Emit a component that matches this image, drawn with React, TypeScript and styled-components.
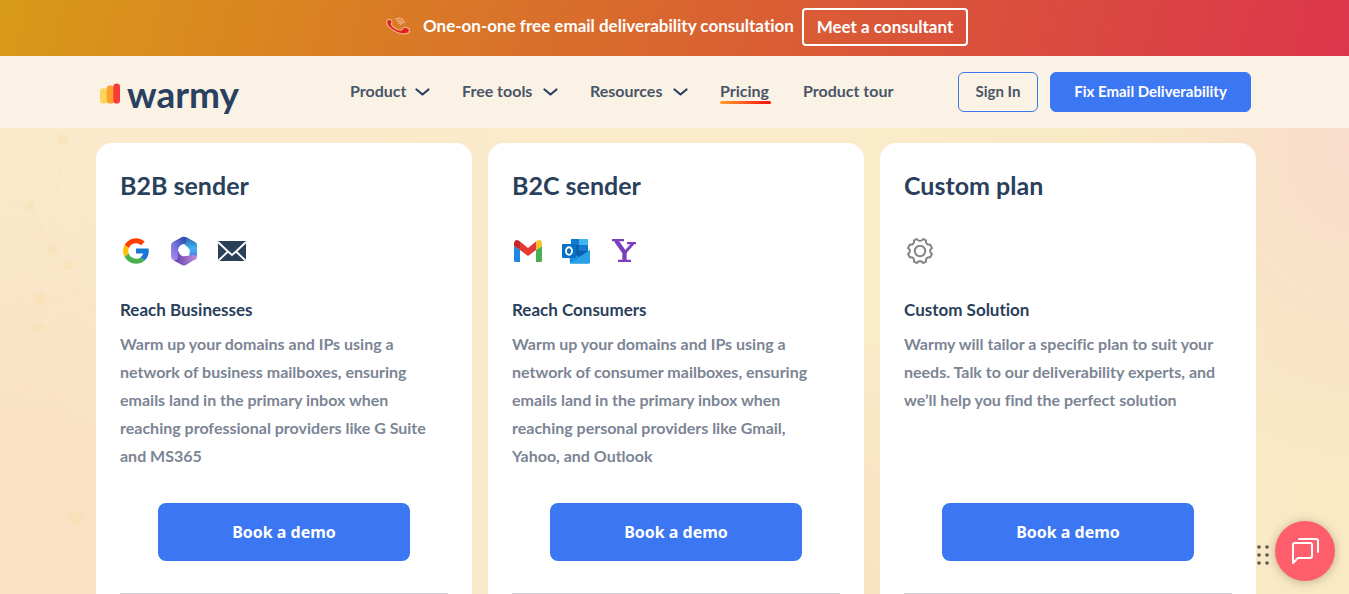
import React from "react";
import styled, { createGlobalStyle } from "styled-components";

const Global = createGlobalStyle`
  *, *::before, *::after { box-sizing: border-box; }
  html, body { margin: 0; }
  body {
    font-family: Lato, "Noto Sans", sans-serif;
    font-variant-ligatures: none;
    color: #2a3f5c;
    overflow: hidden;
  }
  a { color: inherit; text-decoration: none; }
  h2, h3, p, ul { margin: 0; padding: 0; }
`;

const Page = styled.div`
  display: flex;
  flex-direction: column;
  height: 100vh;
  min-width: 1200px;
`;

const Banner = styled.aside`
  display: flex;
  flex-shrink: 0;
  align-items: center;
  justify-content: center;
  gap: 12px;
  height: 56px;
  padding: 0 0 2px 4px;
  background: linear-gradient(105deg, #d99a18 0%, #d9652f 50%, #dc364c 100%);
  color: #fff;
  font-size: 17px;
  font-weight: 700;
`;

const BannerText = styled.span`
  width: 367px;
  padding-bottom: 4px;
  white-space: nowrap;
`;

const ConsultLink = styled.a`
  display: flex;
  align-items: center;
  justify-content: center;
  width: 166px;
  height: 38px;
  padding-bottom: 2px;
  border: 2px solid #fff;
  border-radius: 4px;
`;

const Header = styled.header`
  flex-shrink: 0;
  height: 72px;
  padding-left: 3px;
  background: #faf3e5;
`;

const HeaderInner = styled.div`
  display: flex;
  align-items: center;
  justify-content: space-between;
  width: 1160px;
  height: 100%;
  margin: 0 auto;
  padding: 0 5px 0 4px;
`;

const Logo = styled.a`
  display: flex;
  align-items: center;
  gap: 6px;
  width: 139px;
  padding-top: 4px;
  color: #2a4060;
  font-size: 37px;
  font-weight: 700;
  line-height: 44px;
`;

const Nav = styled.nav`
  display: flex;
  gap: 32px;
  margin-left: 50px;
`;

const NavLink = styled.a<{ $width: number; $active?: boolean }>`
  position: relative;
  display: flex;
  align-items: center;
  justify-content: space-between;
  width: ${(p) => p.$width}px;
  height: 24px;
  color: #4a5568;
  font-size: 16px;
  font-weight: 700;
  white-space: nowrap;

  &::after {
    content: "";
    display: ${(p) => (p.$active ? "block" : "none")};
    position: absolute;
    inset: auto 0 0;
    height: 3px;
    border-radius: 2px;
    background: linear-gradient(90deg, #ff9f2e, #f80f0f);
  }
`;

const NavLabel = styled.span`
  padding-bottom: 4px;
`;

const Actions = styled.div`
  display: flex;
  gap: 12px;
`;

const HeaderButton = styled.button<{ $primary?: boolean }>`
  width: ${(p) => (p.$primary ? 201 : 80)}px;
  height: 40px;
  padding: 0 0 2px;
  border: 1px solid #3b76f3;
  border-radius: 6px;
  background: ${(p) => (p.$primary ? "#3b76f3" : "transparent")};
  color: ${(p) => (p.$primary ? "#fff" : "#4a5568")};
  font-family: inherit;
  font-size: 15px;
  font-weight: 700;
`;

const Plans = styled.main`
  position: relative;
  flex: 1;
  min-height: 0;
  padding: 15px 0 0 3px;
  overflow: hidden;
  background:
    radial-gradient(ellipse 260px 340px at 100% 4%, #f9dccb 0%, #f9dccb00 100%),
    radial-gradient(ellipse 420px 420px at 0% 100%, #fae0c5 30%, #fae0c500 100%),
    radial-gradient(ellipse 340px 260px at 60% 100%, #fae3c3 20%, #fae3c300 100%),
    linear-gradient(90deg, #fae9cb, #faebcb 50%, #f9eac4);
`;

const Network = styled.svg`
  position: absolute;
  top: 0;
  left: 0;
  color: #fae0b0;
`;

const Cards = styled.div`
  position: relative;
  display: grid;
  grid-template-columns: repeat(3, 1fr);
  gap: 16px;
  width: 1160px;
  margin: 0 auto;
`;

const Card = styled.article`
  padding: 24px 24px 64px;
  border-radius: 16px;
  background: #fff;
`;

const PlanName = styled.h2`
  font-size: 25px;
  font-weight: 700;
  line-height: 36px;
`;

const Providers = styled.div`
  display: flex;
  align-items: center;
  gap: 16px;
  height: 32px;
  margin-top: 32px;
`;

const Subtitle = styled.h3`
  margin-top: 31px;
  font-size: 17px;
  font-weight: 700;
  line-height: 24px;
`;

const Description = styled.p`
  min-height: 140px;
  margin-top: 8px;
  padding-right: 8px;
  color: #7b8594;
  font-size: 16px;
  font-weight: 700;
  line-height: 28px;
`;

const DemoButton = styled.button`
  display: block;
  width: 252px;
  height: 58px;
  margin: 33px auto 32px;
  border: 0;
  border-radius: 8px;
  background: #3b76f3;
  color: #fff;
  font-family: "Noto Sans", sans-serif;
  font-size: 16px;
  font-weight: 700;
`;

const Divider = styled.hr`
  margin: 0;
  border: 0;
  border-top: 1px solid #d3d5d8;
`;

const ChatDock = styled.div`
  position: fixed;
  right: 14px;
  bottom: 13px;
  display: flex;
  align-items: center;
  gap: 6px;
`;

const DragDots = styled.svg`
  margin-top: 8px;
`;

const ChatButton = styled.button`
  display: grid;
  place-items: center;
  width: 60px;
  height: 60px;
  padding: 0;
  border: 0;
  border-radius: 50%;
  background: #ff5f6d;
  box-shadow: 0 1px 10px rgba(60, 40, 20, 0.3);
`;

const Chevron = () => (
  <svg width="16" height="10" viewBox="0 0 16 10" fill="none" stroke="#2a4060" strokeWidth="2.200" strokeLinecap="round" strokeLinejoin="round">
    <path d="M2.500 2.500 8.500 7.500 14.500 2.500" />
  </svg>
);

const Phone = () => (
  <svg width="26" height="20" viewBox="0 0 26 20">
    <path d="M2 4 C3 1.500 6.500 2 7 4.500 C7.200 6 5.800 6.300 6.300 7.500 C8 11 13 13.500 16.500 13 C18 12.700 17 10.800 19 10.500 C22 10 25 11.500 24.500 14 C23.500 17.500 17.500 17.500 12.500 15.500 C7 13.500 0.500 8.500 2 4Z" fill="#e0201d" stroke="#efad83" strokeWidth="1.200" />
    <path d="M10.500 2.500 Q17 -1 19.500 6 M12 4.500 Q15.500 2 17.500 7 M13.200 6.500 Q15 5 15.800 8" fill="none" stroke="#efae83" strokeWidth="1.500" />
  </svg>
);

const Google = () => (
  <svg width="32" height="32" viewBox="-1 -1 50 50">
    <path fill="#ff3d00" d="m6.300 14.700 6.600 4.800C14.700 15.100 19 12 24 12c3.100 0 5.800 1.200 8 3l5.700-5.700C34 6.100 29.300 4 24 4 16.300 4 9.700 8.300 6.300 14.700z" />
    <path fill="#ffc107" d="M12.900 19.500 6.300 14.700C3 20 3 28 6.200 33.100l6.500-5C11.700 25 11.700 22 12.900 19.500z" />
    <path fill="#4caf50" d="M24 44c5.200 0 9.900-2 13.400-5.200l-6.200-5.200C29.200 35.100 26.700 36 24 36c-5.200 0-9.600-3.300-11.300-7.900l-6.500 5C9.500 39.600 16.200 44 24 44z" />
    <path fill="#1976d2" d="M43.600 20.100H24v8h11.300c-.8 2.200-2.200 4.200-4.100 5.600l6.200 5.200C37 39.200 44 34 44 24c0-1.300-.1-2.600-.4-3.900z" />
  </svg>
);

const Microsoft = () => (
  <svg width="32" height="32" viewBox="0 0 32 32">
    <defs>
      <linearGradient id="m365a" x1="0" y1="1" x2="1" y2="0"><stop stopColor="#b78cf0" /><stop offset=".5" stopColor="#6a6fd8" /><stop offset="1" stopColor="#2446a0" /></linearGradient>
      <linearGradient id="m365b" x1="0" y1="0" x2="0" y2="1"><stop stopColor="#2a62b8" /><stop offset=".5" stopColor="#3fb4ee" /><stop offset="1" stopColor="#5563e6" /></linearGradient>
      <linearGradient id="m365c" x1="0" y1="0" x2="1" y2="0"><stop stopColor="#5a3aa8" /><stop offset="1" stopColor="#c58ddf" /></linearGradient>
    </defs>
    <path fill="url(#m365b)" d="M14 2h4l9 5q2 1 2 3v11q0 3-3 4l-5-2 1-8-6-6-5-2z" />
    <path fill="url(#m365a)" d="M14 2 5 7Q3 8 3 11v10q0 4 3 4 4 1 6-3l-2-6q0-4 3-6l5-2V3q-2-2-4-1z" />
    <path fill="url(#m365c)" d="M10 16v7q-1 3-5 2l9 5q2 1 4 0l8-5q3-1 3-4l-3-1-8 1q-4 0-8-5z" />
    <circle cx="16" cy="16" r="5.200" fill="#fff" />
  </svg>
);

const Mail = () => (
  <svg width="32" height="32" viewBox="0 0 32 32">
    <path fill="#2a4059" d="M2 6h28v20H2z" />
    <path d="m2 7 10 9.500 4 3.500 4-3.500L30 7M2 26l10-9.500M30 26l-10-9.500" fill="none" stroke="#fff" strokeWidth="1.800" />
  </svg>
);

const Gmail = () => (
  <svg width="32" height="32" viewBox="0 0 32 32">
    <path fill="#1e88e5" d="M2 11v14.500q0 1.500 1.500 1.500H8V15z" />
    <path fill="#4caf50" d="M30 11v14.500q0 1.500-1.500 1.500H24V15z" />
    <path fill="#e53935" d="m8 6.500 8 6.500 8-6.500V15l-8 6-8-6z" />
    <path fill="#c62828" d="M2 9q0-4 3-4 1.500 0 3 1.500V15l-6-4z" />
    <path fill="#fbc02d" d="M30 9q0-4-3-4-1.500 0-3 1.500V15l6-4z" />
  </svg>
);

const Outlook = () => (
  <svg width="32" height="32" viewBox="0 0 32 32">
    <path fill="#0a5fae" d="M11 4h17v18H11z" />
    <path fill="#1279cf" d="M11 4h8v6h-8zm8 6h9v6h-9z" />
    <path fill="#42b4f2" d="M19 4h9v6h-9z" />
    <path fill="#1490df" d="M9 15l10 7 11-7v12q0 1.500-1.500 1.500H10z" />
    <path fill="#2ba0e4" d="m30 15-20 13.500h18.500q1.500 0 1.500-1.500z" />
    <rect x="2" y="9" width="14" height="14" rx="1" fill="#0570c4" />
    <ellipse cx="9" cy="16" rx="3" ry="3.800" fill="none" stroke="#fff" strokeWidth="1.900" />
  </svg>
);

const Yahoo = () => (
  <svg width="32" height="32" viewBox="0 0 32 32" fill="none" stroke="#7b3fbe">
    <path strokeWidth="2.200" d="M4 5.100h12M19 8.100h9M10 25.900h13" />
    <path strokeWidth="4.300" d="m8 5.500 8.500 12V26" />
    <path strokeWidth="2.800" d="m25 8.500-8 9" />
  </svg>
);

const Gear = () => (
  <svg width="32" height="32" viewBox="0 0 32 32" fill="none" stroke="#858585" strokeWidth="2" strokeLinejoin="round">
    <circle cx="16" cy="16" r="5.200" />
    <path d="M13 4q3 4 6 0l3 1.400q-.6 4.600 4.200 4.200L28 13q-4 3 0 6l-1.800 3.400q-4.800-.4-4.200 4.200L19 28q-3-4-6 0l-3-1.400q.6-4.600-4.200-4.200L4 19q4-3 0-6l1.800-3.400q4.800.4 4.200-4.200z" />
  </svg>
);

const LogoBars = () => (
  <svg width="22" height="22" viewBox="0 0 22 22">
    <rect x="0" y="5" width="8" height="16" rx="3" fill="#ffd45c" />
    <rect x="7" y="2" width="8" height="19" rx="3.500" fill="#ffa02e" />
    <rect x="14" y="0" width="7" height="21" rx="3.500" fill="#fa393b" />
  </svg>
);

const plans = [
  {
    name: "B2B sender",
    icons: [Google, Microsoft, Mail],
    subtitle: "Reach Businesses",
    text: "Warm up your domains and IPs using a network of business mailboxes, ensuring emails land in the primary inbox when reaching professional providers like G Suite and MS365",
  },
  {
    name: "B2C sender",
    icons: [Gmail, Outlook, Yahoo],
    subtitle: "Reach Consumers",
    text: "Warm up your domains and IPs using a network of consumer mailboxes, ensuring emails land in the primary inbox when reaching personal providers like Gmail, Yahoo, and Outlook",
  },
  {
    name: "Custom plan",
    icons: [Gear],
    subtitle: "Custom Solution",
    text: "Warmy will tailor a specific plan to suit your needs. Talk to our deliverability experts, and we’ll help you find the perfect solution",
  },
];

const nav = [
  { label: "Product", width: 80, menu: true },
  { label: "Free tools", width: 96, menu: true },
  { label: "Resources", width: 98, menu: true },
  { label: "Pricing", width: 51, active: true },
  { label: "Product tour", width: 94 },
];

export default function App() {
  return (
    <Page>
      <Global />
      <Banner>
        <Phone />
        <BannerText>One-on-one free email deliverability consultation</BannerText>
        <ConsultLink href="#consultant">Meet a consultant</ConsultLink>
      </Banner>
      <Header>
        <HeaderInner>
          <Logo href="#home">
            <LogoBars />
            <span>warmy</span>
          </Logo>
          <Nav>
            {nav.map((item) => (
              <NavLink key={item.label} href="#nav" $width={item.width} $active={item.active}>
                <NavLabel>{item.label}</NavLabel>
                {item.menu && <Chevron />}
              </NavLink>
            ))}
          </Nav>
          <Actions>
            <HeaderButton>Sign In</HeaderButton>
            <HeaderButton $primary>Fix Email Deliverability</HeaderButton>
          </Actions>
        </HeaderInner>
      </Header>
      <Plans>
        <Network width="140" height="466" viewBox="0 0 140 466" fill="none" stroke="currentColor" strokeOpacity=".4" aria-hidden="true">
          <path d="M0 92 96 128 M0 152 34 190 75 270 M6 0 50 125 96 190 M15 0 96 110 M30 0 96 100 M62 12 52 122 40 172 M62 12 96 62 M62 12 32 27 M0 71 30 78 54 122 M18 102 34 172 M0 190 96 160 M40 172 68 137 96 170 M38 200 96 180 M38 200H96 M38 200 96 222 M38 200 76 390 M0 350 76 390 96 370 M76 390 46 466 M76 390 96 466" />
          <g fill="currentColor" fillOpacity=".5" stroke="none">
            <circle cx="63" cy="11" r="5" />
            <circle cx="30" cy="78" r="4" />
            <circle cx="53" cy="122" r="5" />
            <circle cx="68" cy="137" r="5" />
            <circle cx="40" cy="171" r="6" />
            <circle cx="38" cy="199" r="5" />
            <circle cx="76" cy="390" r="7" />
            <circle cx="22" cy="236" r="2" />
            <circle cx="31" cy="262" r="2" />
          </g>
        </Network>
        <Cards>
          {plans.map((plan) => (
            <Card key={plan.name}>
              <PlanName>{plan.name}</PlanName>
              <Providers>
                {plan.icons.map((Icon, i) => (
                  <Icon key={i} />
                ))}
              </Providers>
              <Subtitle>{plan.subtitle}</Subtitle>
              <Description>{plan.text}</Description>
              <DemoButton>Book a demo</DemoButton>
              <Divider />
            </Card>
          ))}
        </Cards>
      </Plans>
      <ChatDock>
        <DragDots width="12" height="20" viewBox="0 0 12 20" fill="#5b5753" aria-hidden="true">
          <circle cx="2" cy="2" r="1.800" /><circle cx="10" cy="2" r="1.800" />
          <circle cx="2" cy="10" r="1.800" /><circle cx="10" cy="10" r="1.800" />
          <circle cx="2" cy="18" r="1.800" /><circle cx="10" cy="18" r="1.800" />
        </DragDots>
        <ChatButton aria-label="Open chat">
          <svg width="30" height="30" viewBox="0 0 30 30" fill="none" stroke="#fff" strokeWidth="2" strokeLinecap="round" strokeLinejoin="round">
            <path d="M5 7h15q2 0 2 2v11q0 2-2 2H8l-5 5V9q0-2 2-2zM9 3h17q2 0 2 2v11" />
          </svg>
        </ChatButton>
      </ChatDock>
    </Page>
  );
}
